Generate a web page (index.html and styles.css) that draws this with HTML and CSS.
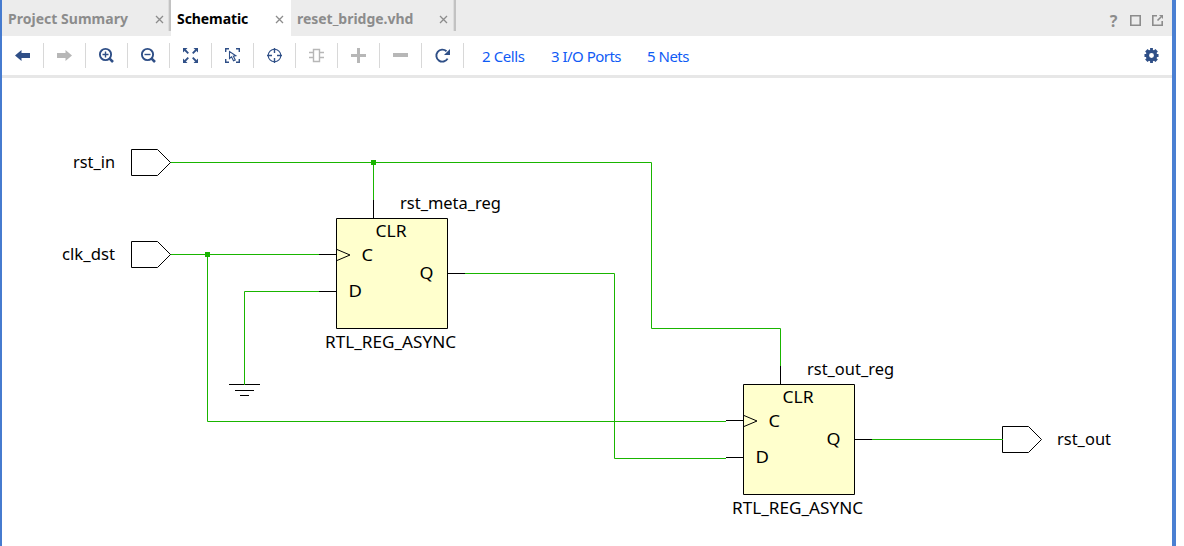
FILE: index.html
```html
<!DOCTYPE html>
<html lang="en">
<head>
<meta charset="utf-8">
<title>Schematic</title>
<link rel="stylesheet" href="styles.css">
</head>
<body>
<main class="window">
  <header class="tabs">
    <div class="tab tab-summary"><span class="tab-label">Project Summary</span><svg class="close" viewBox="0 0 9 9"><path d="M1 1l7 7M8 1L1 8"/></svg></div>
    <div class="tab tab-active"><span class="tab-label">Schematic</span><svg class="close" viewBox="0 0 9 9"><path d="M1 1l7 7M8 1L1 8"/></svg></div>
    <div class="tab tab-file"><span class="tab-label">reset_bridge.vhd</span><svg class="close" viewBox="0 0 9 9"><path d="M1 1l7 7M8 1L1 8"/></svg></div>
    <div class="window-actions">
      <span class="help">?</span>
      <svg class="action" viewBox="0 0 11 11"><path d="M.8 .8h9.400v9.400H.8z"/></svg>
      <svg class="action" viewBox="0 0 11 11"><path d="M5 .8H.8v9.400h9.400V6M5.500 5.500L9 2"/><path class="solid" d="M7 0h4v4z"/></svg>
    </div>
  </header>
  <nav class="toolbar">
    <div class="tool"><svg class="icon" viewBox="0 0 15 15"><path class="fill" d="M0 7.500L6.500 2v3H15v5H6.500v3z"/></svg></div>
    <div class="tool disabled"><svg class="icon" viewBox="0 0 15 15"><path class="fill" d="M15 7.500L8.500 2v3H0v5h8.500v3z"/></svg></div>
    <div class="tool"><svg class="icon" viewBox="0 0 15 15"><circle class="ring" cx="6.500" cy="6.500" r="5.600"/><path class="line" d="M3.500 6.500h6M6.500 3.500v6"/><path class="thick" d="M10.600 10.600l3.400 3.400"/></svg></div>
    <div class="tool"><svg class="icon" viewBox="0 0 15 15"><circle class="ring" cx="6.500" cy="6.500" r="5.600"/><path class="line" d="M3.500 6.500h6"/><path class="thick" d="M10.600 10.600l3.400 3.400"/></svg></div>
    <div class="tool"><svg class="icon" viewBox="0 0 15 15"><path class="fill" d="M0 0h4.500L0 4.500zM15 0v4.500L10.500 0zM0 15v-4.500L4.500 15zM15 15h-4.500l4.500-4.500z"/><path class="arm" d="M2 2l3.300 3.300M13 2L9.700 5.300M2 13l3.300-3.300M13 13L9.700 9.700"/></svg></div>
    <div class="tool"><svg class="icon" viewBox="0 0 15 15"><path class="line" d="M.7 4V.7H4M11 .7h3.300V4M.7 11v3.300H4M14.300 11v3.300H11"/><path class="fine" d="M4.500 3.500v7l2-1.700 2 4 1.800-.9-2-3.800 2.500-.4z"/></svg></div>
    <div class="tool"><svg class="icon" viewBox="0 0 15 15"><circle class="fine" cx="7.500" cy="7.500" r="6.300"/><path class="line" d="M7.500 0v5M7.500 10v5M0 7.500h5M10 7.500h5"/></svg></div>
    <div class="tool disabled"><svg class="icon" viewBox="0 0 15 15"><path class="line" d="M4.500 1.500h6v12h-6zM0 4.500h4M0 9.500h4M11 4.500h4M11 9.500h4"/></svg></div>
    <div class="tool disabled"><svg class="icon" viewBox="0 0 15 15"><path class="fill" d="M6 0h3v6h6v3H9v6H6V9H0V6h6z"/></svg></div>
    <div class="tool disabled"><svg class="icon" viewBox="0 0 15 15"><path class="fill" d="M0 5h15v4H0z"/></svg></div>
    <div class="tool"><svg class="icon" viewBox="0 0 15 15"><path class="ring" d="M12.600 10.600A6 6 0 1 1 11.500 3.300"/><path class="fill" d="M15 1v6H9z"/></svg></div>
    <div class="links"><a class="link cells">2 Cells</a><a class="link ports">3 I/O Ports</a><a class="link nets">5 Nets</a></div>
    <svg class="gear" viewBox="0 0 16 16"><path class="fill" fill-rule="evenodd" d="M6.500 0h3v2l1.200.5 1.500-1.400 2.600 2.600-1.400 1.500.5 1.300h1.600v3h-1.600l-.5 1.300 1.400 1.500-2.600 2.600-1.500-1.400-1.200.5v2h-3v-2l-1.200-.5-1.500 1.400-2.600-2.600 1.400-1.500-.5-1.300H.5v-3h1.600l.5-1.300-1.400-1.500 2.600-2.600 1.500 1.400L6.500 2zM8 5.400a2.600 2.600 0 1 0 0 5.200 2.600 2.600 0 0 0 0-5.200z"/></svg>
  </nav>
  <svg class="schematic" viewBox="2 78 1170 468">
    <defs>
      <path id="port" d="M.5 .5h26l13 13-13 13h-26z"/>
      <g id="register">
        <path class="pin" d="M37.500-18V0M-17 36.500H0M-17 73.500H0M111 55.500h18"/>
        <path class="body" d="M.5 .5h111v110H.5z"/>
        <path class="pin-clock" d="M1 31.500l13 5.500-13 5.500"/>
        <text x="39.500" y="19" textLength="31" lengthAdjust="spacingAndGlyphs">CLR</text>
        <text x="25.500" y="43" textLength="11.500" lengthAdjust="spacingAndGlyphs">C</text>
        <text x="12.500" y="79" textLength="13.500" lengthAdjust="spacingAndGlyphs">D</text>
        <text x="83.500" y="61" textLength="14" lengthAdjust="spacingAndGlyphs">Q</text>
        <text x="-11" y="130" textLength="131" lengthAdjust="spacingAndGlyphs">RTL_REG_ASYNC</text>
      </g>
    </defs>
    <path class="ground" d="M229 384.500h31M235 390.500h19M240 395.500h9"/>
    <g class="net">
      <path d="M170 162.500H651.500V328.500H780.500V366M373.500 162V200"/>
      <path d="M170 254.500H319M207.500 254V421.500H726"/>
      <path d="M319 291.500H244.500V385"/>
      <path d="M465 273.500H614.500V458.500H726"/>
      <path d="M872 439.500H1003"/>
    </g>
    <path class="junction" d="M371 160h5v5h-5zM205 252h5v5h-5z"/>
    <use class="port" href="#port" x="131" y="149"/>
    <use class="port" href="#port" x="131" y="241"/>
    <use class="port" href="#port" x="1002" y="426"/>
    <path class="end" d="M1002 439.500h1"/>
    <use href="#register" x="336" y="218"/>
    <use href="#register" x="743" y="384"/>
    <text x="73" y="168" textLength="42" lengthAdjust="spacingAndGlyphs">rst_in</text>
    <text x="62" y="260" textLength="53" lengthAdjust="spacingAndGlyphs">clk_dst</text>
    <text x="400" y="209" textLength="101" lengthAdjust="spacingAndGlyphs">rst_meta_reg</text>
    <text x="807" y="375" textLength="87" lengthAdjust="spacingAndGlyphs">rst_out_reg</text>
    <text x="1057" y="445" textLength="54" lengthAdjust="spacingAndGlyphs">rst_out</text>
  </svg>
</main>
</body>
</html>
```
FILE: styles.css
```css
* { box-sizing: border-box; }
body { margin: 0; background: #fff; font-family: "Noto Sans", "Open Sans", sans-serif; }
svg { display: block; flex: none; }
.window { width: 1176px; height: 546px; border-left: 2px solid #467bcf; border-right: 4px solid #4a7fd2; background: #fff; overflow: hidden; }
.tabs { display: flex; height: 36px; background: #ececec; color: #8c8c8c; }
.tab { display: flex; align-items: center; justify-content: space-between; height: 36px; font-size: 14px; font-weight: 700; white-space: nowrap; }
.tab-label { line-height: 36px; margin-top: 1px; }
.tab-summary { width: 169px; padding: 0 7px 0 6px; background: linear-gradient(90deg, #ddd 1px, #c2c2c2 1px) right top / 3px 31px no-repeat; letter-spacing: .02px; }
.tab-active { width: 120px; padding: 0 7px 0 6px; background: #fff; color: #000; letter-spacing: -.08px; }
.tab-file { width: 165px; padding: 0 8px 0 6px; background: linear-gradient(90deg, #ddd 1px, #c2c2c2 1px) right top / 3px 31px no-repeat; letter-spacing: -.03px; }
.close { width: 9px; height: 9px; margin-top: 2px; fill: none; stroke: #8c8c8c; stroke-width: 1.300; }
.window-actions { display: flex; gap: 11px; align-items: center; margin-left: auto; padding: 5px 9px 0 0; }
.help { width: 11px; font-size: 16px; line-height: 20px; font-weight: 700; text-align: center; }
.action { width: 11px; height: 11px; fill: none; stroke: #8c8c8c; stroke-width: 1.600; }
.action .solid { fill: #8c8c8c; stroke: none; }
.toolbar { display: flex; height: 42px; border-bottom: 3px solid #e7e7e7; color: #2f4f87; }
.tool { width: 42px; height: 25px; margin-top: 7px; padding: 5px 0 0 13px; border-right: 1px solid #d8d8d8; }
.disabled { color: #b7b7b7; }
.icon { width: 15px; height: 15px; overflow: visible; }
.fill { fill: currentColor; }
.line { fill: none; stroke: currentColor; stroke-width: 1.400; }
.ring { fill: none; stroke: currentColor; stroke-width: 1.900; }
.arm { fill: none; stroke: currentColor; stroke-width: 1.800; }
.fine { fill: none; stroke: currentColor; stroke-width: 1.100; }
.thick { fill: none; stroke: currentColor; stroke-width: 2.600; }
.links { display: flex; padding: 9px 0 0 18px; font-size: 15px; line-height: 22px; color: #0f5bf5; white-space: nowrap; }
.link { display: block; }
.cells { width: 69px; letter-spacing: -.4px; }
.ports { width: 96px; letter-spacing: -.52px; }
.nets { letter-spacing: -.5px; }
.gear { width: 15px; height: 15px; margin: 12px 13px 0 auto; }
.schematic { width: 1170px; height: 468px; font-size: 17px; }
.schematic text { fill: #000; }
.port { fill: #fff; stroke: #000; }
.body { fill: #ffffcd; stroke: #000; }
.pin, .ground { fill: none; stroke: #000; }
.pin-clock { fill: none; stroke: #000; }
.net { fill: none; stroke: #19b500; }
.end { stroke: #19b500; }
.junction { fill: #19b500; }
```
